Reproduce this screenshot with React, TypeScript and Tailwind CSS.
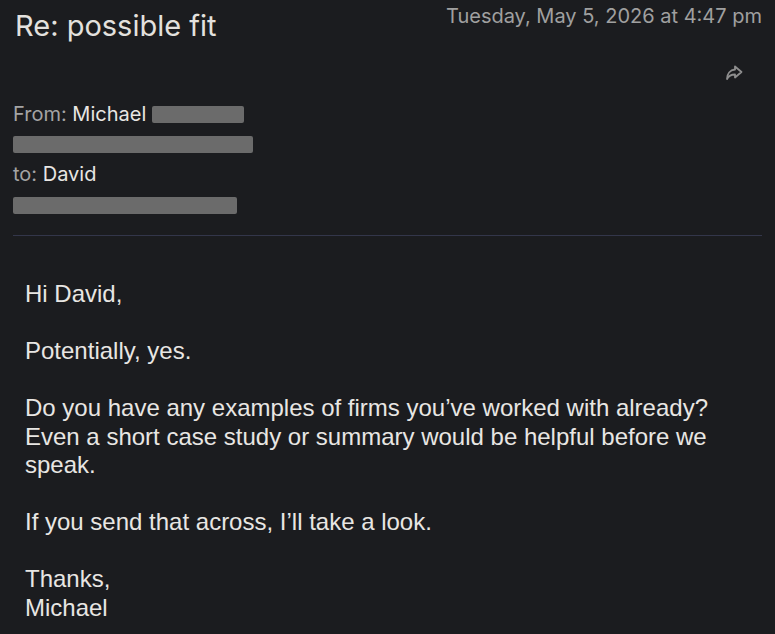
import React from "react";

function ForwardIcon() {
  return (
    <svg width="20" height="18" viewBox="0 0 20 18" fill="none" stroke="#8e8e8e" strokeWidth="1.8" strokeLinejoin="round" strokeLinecap="round">
      <path d="M11 2.5 L17.5 8 L11 13.5 V10.5 C7 10.5 4.5 12 3 15 C3 10 6 6 11 5.5 Z" />
    </svg>
  );
}

function Bar({ w }: { w: string }) {
  return <span className={`inline-block h-[17px] rounded-[2px] bg-[#6b6b6b] ${w}`} />;
}

export default function App() {
  const head = { fontFamily: "Inter, 'Noto Sans', sans-serif" };
  const body = { fontFamily: "'Liberation Sans', Arial, sans-serif" };
  return (
    <div className="min-h-[634px] w-full bg-[#1b1c1f] px-[13px] pb-6 text-[#e8e6e3]">
      <div className="flex items-start justify-between" style={head}>
        <h1 className="pl-[2px] pt-[8px] text-[29px] leading-[35px] font-normal text-[#e3e1de]">Re: possible fit</h1>
        <div className="pt-[4px] text-[20px] leading-[24px] text-[#a0a0a0]">Tuesday, May 5, 2026 at 4:47 pm</div>
      </div>
      <div className="flex justify-end pr-[18px] pt-[21px]">
        <ForwardIcon />
      </div>
      <div className="pt-[17px] text-[20px] leading-[30px]" style={head}>
        <div className="flex items-center gap-[6px]">
          <span><span className="text-[#a4a4a4]">From:</span> <span className="text-[#e8e6e3]">Michael</span></span>
          <Bar w="w-[92px]" />
        </div>
        <div className="flex h-[30px] items-center">
          <Bar w="w-[240px]" />
        </div>
        <div><span className="text-[#a4a4a4]">to:</span> <span className="text-[#e8e6e3]">David</span></div>
        <div className="flex h-[32px] items-center">
          <Bar w="w-[224px]" />
        </div>
      </div>
      <div className="mt-[14px] h-px bg-[#33364a]" />
      <div className="pl-[12px] pt-[44px] text-[24px] leading-[28.5px] text-[#e8e6e3]" style={body}>
        <p>Hi David,</p>
        <br />
        <p>Potentially, yes.</p>
        <br />
        <p>Do you have any examples of firms you’ve worked with already?<br />Even a short case study or summary would be helpful before we<br />speak.</p>
        <br />
        <p>If you send that across, I’ll take a look.</p>
        <br />
        <p>Thanks,<br />Michael</p>
      </div>
    </div>
  );
}
